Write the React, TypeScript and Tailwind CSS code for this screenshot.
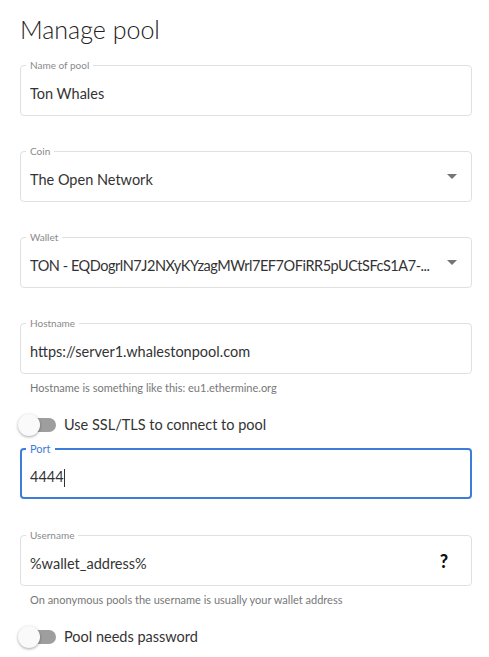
import { ReactNode } from 'react'

const font = { fontFamily: '"Lato", "Open Sans", sans-serif' }

function Field({
  label,
  children,
  focused = false,
  right,
  tight = false,
}: {
  label: string
  children: ReactNode
  focused?: boolean
  right?: ReactNode
  tight?: boolean
}) {
  return (
    <fieldset
      className={
        focused
          ? 'rounded-[4px] border-2 border-[#3b7dd8] px-[8px] min-w-0'
          : 'rounded-[4px] border border-[#e0e0e0] px-[9px] min-w-0'
      }
    >
      <legend
        className={
          focused
            ? '-ml-[4px] px-[4px] text-[11px] leading-[12px] text-[#3b7dd8]'
            : '-ml-[4px] px-[4px] text-[10px] leading-[12px] text-[#8a8a8a]'
        }
      >
        {label}
      </legend>
      <div
        className={
          focused
            ? 'flex items-center pt-[12px] pb-[10px] leading-[20px]'
            : 'flex items-center pt-[13px] pb-[11px] leading-[20px]'
        }
      >
        <div
          className={
            tight
              ? 'flex-1 min-w-0 whitespace-nowrap overflow-hidden text-[14.5px] tracking-[-0.45px] text-[#333333]'
              : 'flex-1 min-w-0 truncate text-[14.5px] text-[#333333]'
          }
        >
          {children}
        </div>
        {right}
      </div>
    </fieldset>
  )
}

function Caret() {
  return (
    <svg width="10" height="5" viewBox="0 0 10 5" className="ml-[8px] mr-[5px] -mt-[8px] shrink-0">
      <path d="M0 0 L10 0 L5 5 Z" fill="#757575" />
    </svg>
  )
}

function Toggle({ label }: { label: string }) {
  return (
    <div className="flex items-center">
      <div className="relative w-[38px] h-[22px] shrink-0">
        <div className="absolute left-[10px] top-[4px] w-[26px] h-[14px] rounded-full bg-[#9e9e9e]" />
        <div className="absolute left-[-2px] top-0 w-[22px] h-[22px] rounded-full bg-[#fafafa] shadow-[0_1px_3px_rgba(0,0,0,0.35)]" />
      </div>
      <span className="ml-[6px] text-[14.5px] text-[#333333]">{label}</span>
    </div>
  )
}

export default function App() {
  return (
    <div className="min-h-screen bg-white pl-[20px] pr-[17px] pt-[12px]" style={font}>
      <h1 className="text-[25px] font-light leading-[34px] text-[#222222]">Manage pool</h1>

      <div className="mt-[13px]">
        <Field label="Name of pool">Ton Whales</Field>
      </div>

      <div className="mt-[29px]">
        <Field label="Coin" right={<Caret />}>
          The Open Network
        </Field>
      </div>

      <div className="mt-[29px]">
        <Field label="Wallet" right={<Caret />} tight>
          TON - EQDogrlN7J2NXyKYzagMWrl7EF7OFiRR5pUCtSFcS1A7-...
        </Field>
      </div>

      <div className="mt-[29px]">
        <Field label="Hostname">https://server1.whalestonpool.com</Field>
        <p className="mt-[6px] px-[10px] text-[11px] leading-[16px] text-[#777777]">
          Hostname is something like this: eu1.ethermine.org
        </p>
      </div>

      <div className="mt-[18px]">
        <Toggle label="Use SSL/TLS to connect to pool" />
      </div>

      <div className="mt-[7px]">
        <Field label="Port" focused>
          <span>4444</span>
          <span className="inline-block w-px h-[18px] bg-[#333333] align-middle" />
        </Field>
      </div>

      <div className="mt-[30px]">
        <Field
          label="Username"
          right={<span className="mr-[14px] -mt-[6px] text-[18px] font-black leading-[20px] text-[#111111]">?</span>}
        >
          %wallet_address%
        </Field>
        <p className="mt-[6px] px-[10px] text-[11px] leading-[16px] text-[#777777]">
          On anonymous pools the username is usually your wallet address
        </p>
      </div>

      <div className="mt-[18px]">
        <Toggle label="Pool needs password" />
      </div>
    </div>
  )
}
